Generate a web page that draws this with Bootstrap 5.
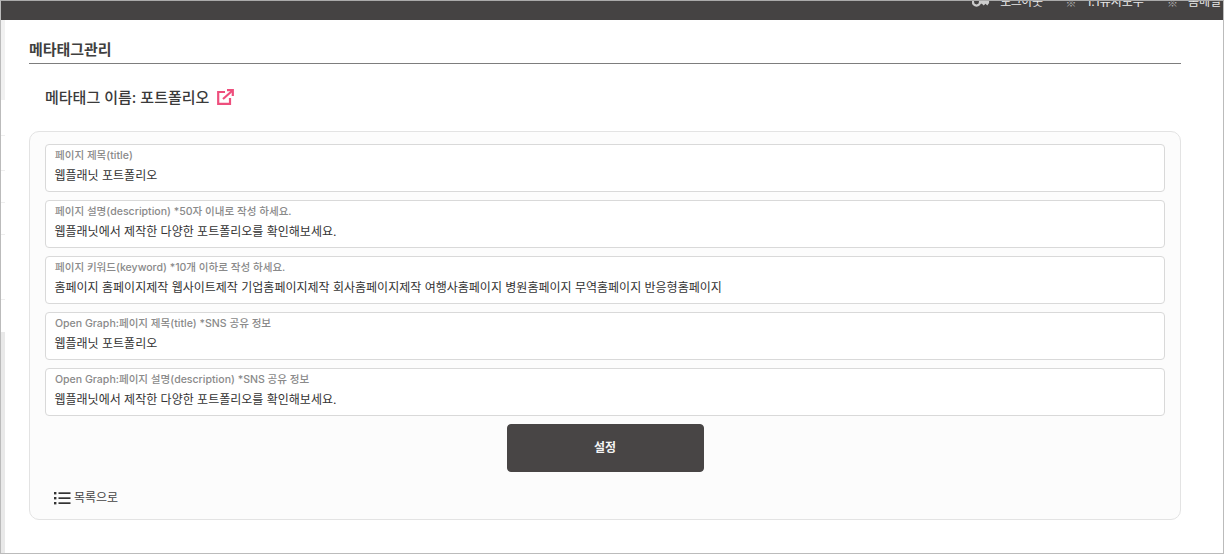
<!DOCTYPE html>
<html lang="ko">
<head>
<meta charset="utf-8">
<title>메타태그관리</title>
<link rel="stylesheet" href="https://cdn.jsdelivr.net/npm/bootstrap@5.3.0/dist/css/bootstrap.min.css">
<style>
html,body{height:100%;overflow:hidden}
body{background:#fff;font-family:Inter,"Noto Sans CJK KR","Noto Sans",sans-serif;color:#333;}
.shot-frame{width:1224px;height:554px;border-top:1px solid #aaa;border-right:1px solid #bbb;border-bottom:1px solid #bbb;border-left:1px solid #bbb;display:flex;flex-direction:column;overflow:hidden}
.body-row{display:flex;flex:1;min-height:0}
.side-strip{width:4px;flex:none;background:linear-gradient(#f1f1f1 0 80px,#fff 80px 115px,#eee 115px 116px,#fff 116px 150px,#eee 150px 151px,#fff 151px 182px,#eee 182px 183px,#fff 183px 214px,#eee 214px 215px,#fff 215px 279px,#eee 279px 280px,#fff 280px 312px,#e9e9e9 312px 100%)}
.main-col{flex:1;min-width:0}
.top-strip{height:19px;flex:none;background:#454343;overflow:hidden;display:flex;justify-content:flex-end;align-items:flex-start;color:#e8e8e8;font-size:12px;line-height:20px;gap:23px;white-space:nowrap}
.top-item{display:flex;align-items:center;gap:10px;margin-top:-9px}
.top-item.lastone{margin-right:2px}
.top-mark{color:#aaa;width:11px;font-size:11px;font-family:"Noto Sans CJK KR",sans-serif}
.top-tight{letter-spacing:-.5px}
.page-body{padding:0 42px 0 24px}
.page-title{font-size:15px;font-weight:700;line-height:22px;color:#3f3f3f;margin:0;padding:19px 0 3px;border-bottom:1px solid #7d7d7d;height:44px;letter-spacing:-.05px}
.sub-title{font-size:15px;font-weight:500;color:#3a3a3a;line-height:22px;margin:0;padding:23px 0 0 16px;height:67px;display:flex;align-items:flex-start;gap:7px}
.sub-title svg{margin:2px 0 0 1px}
.meta-panel{background:#fcfcfc;border:1px solid #e3e3e3;border-radius:10px;padding:12px 15px 0;height:389px}
.meta-field{height:48px;background:#fff;border:1px solid #d9d9d9;border-radius:4px;padding:3px 9px 0;margin-bottom:8px}
.meta-label{font-size:10.55px;line-height:15px;color:#8a8a8a;font-weight:500;white-space:nowrap}
.meta-value{font-size:12px;line-height:20px;color:#333;margin:3px 0 0 -.5px;white-space:nowrap}
.save-btn{width:197px;height:48px;background:#484545;border-color:#484545;color:#f4f4f4;font-size:12px;font-weight:700;border-radius:4px;padding:0}
.save-row{display:flex;justify-content:center}
.back-link{display:flex;align-items:center;gap:3px;font-size:12px;color:#444;text-decoration:none;margin:17px 0 0 9px;line-height:18px}
</style>
</head>
<body>
<div class="shot-frame">
  <div class="top-strip">
    <span class="top-item"><svg width="18" height="12" viewBox="0 0 20 12"><circle cx="5" cy="6" r="4" fill="none" stroke="#ccc" stroke-width="2.5"/><path d="M9 5h10v2l-2 3-2-2-2 2-2-2H9z" fill="#ccc"/></svg><span class="top-tight">로그아웃</span></span>
    <span class="top-item"><span class="top-mark">※</span>1:1유지보수</span>
    <span class="top-item lastone"><span class="top-mark">※</span>홈메일</span>
  </div>
  <div class="body-row">
    <div class="side-strip"></div>
    <div class="main-col">
      <div class="page-body">
        <h1 class="page-title">메타태그관리</h1>
        <h2 class="sub-title">메타태그 이름: 포트폴리오
          <svg width="17" height="16" viewBox="0 0 17 16" fill="none" stroke="#ee4f7d" stroke-width="2.2"><path d="M8 3H1.2v11.8H13V9"/><path d="M6 10 15 2"/><path d="M10 1.2h5.8V7"/></svg>
        </h2>
        <form class="meta-panel">
          <div class="meta-field"><div class="meta-label">페이지 제목(title)</div><div class="meta-value">웹플래닛 포트폴리오</div></div>
          <div class="meta-field"><div class="meta-label">페이지 설명(description) *50자 이내로 작성 하세요.</div><div class="meta-value">웹플래닛에서 제작한 다양한 포트폴리오를 확인해보세요.</div></div>
          <div class="meta-field"><div class="meta-label">페이지 키워드(keyword) *10개 이하로 작성 하세요.</div><div class="meta-value">홈페이지 홈페이지제작 웹사이트제작 기업홈페이지제작 회사홈페이지제작 여행사홈페이지 병원홈페이지 무역홈페이지 반응형홈페이지</div></div>
          <div class="meta-field"><div class="meta-label">Open Graph:페이지 제목(title) *SNS 공유 정보</div><div class="meta-value">웹플래닛 포트폴리오</div></div>
          <div class="meta-field"><div class="meta-label">Open Graph:페이지 설명(description) *SNS 공유 정보</div><div class="meta-value">웹플래닛에서 제작한 다양한 포트폴리오를 확인해보세요.</div></div>
          <div class="save-row"><button type="button" class="btn save-btn">설정</button></div>
          <a class="back-link" href="#"><svg width="17" height="14" viewBox="0 0 17 14" fill="#333"><rect x="0" y="1" width="2.4" height="2.4"/><rect x="0" y="6" width="2.4" height="2.4"/><rect x="0" y="11" width="2.4" height="2.4"/><rect x="4.5" y="1.3" width="12" height="1.7"/><rect x="4.5" y="6.3" width="12" height="1.7"/><rect x="4.5" y="11.3" width="12" height="1.7"/></svg>목록으로</a>
        </form>
      </div>
    </div>
  </div>
</div>
</body>
</html>
